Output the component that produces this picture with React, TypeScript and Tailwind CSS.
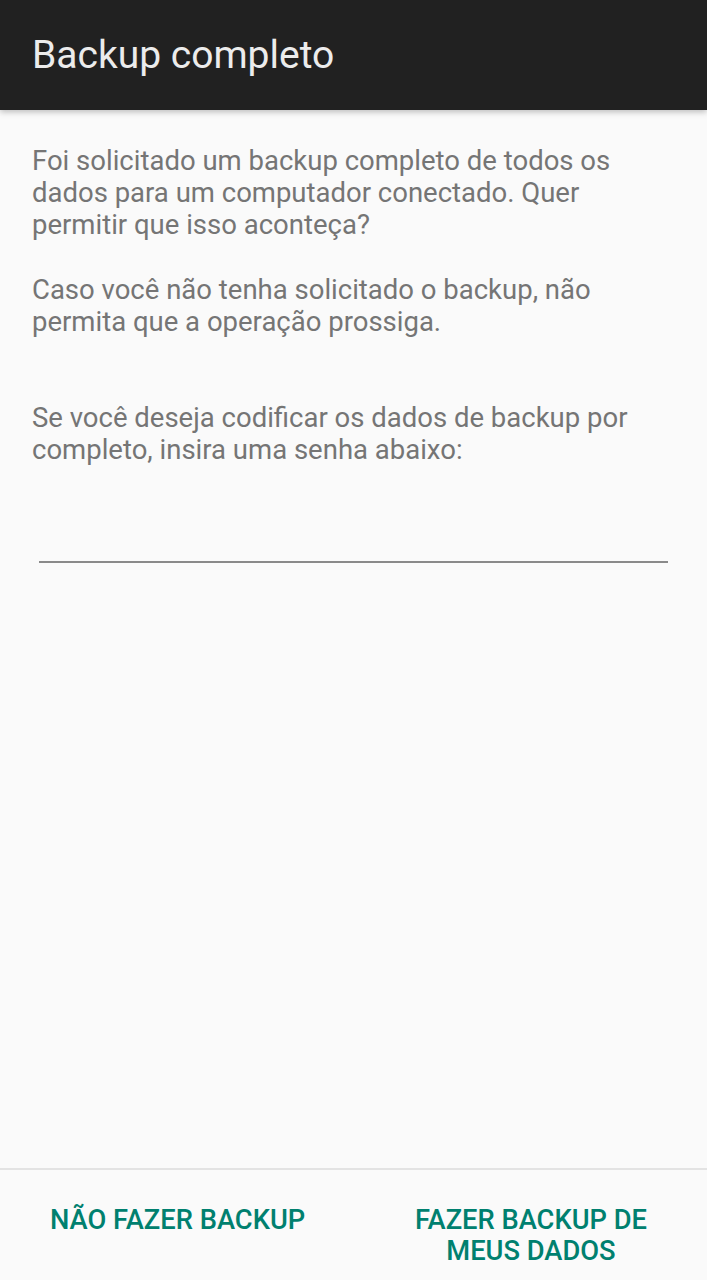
import React from "react";

export default function App() {
  return (
    <div
      className="w-[707px] h-[1280px] bg-[#fafafa] flex flex-col overflow-hidden"
      style={{ fontFamily: "Roboto, 'Noto Sans', sans-serif" }}
    >
      <div className="h-[110px] bg-[#212121] flex items-center px-[32px] shadow-[0_2px_6px_rgba(0,0,0,0.25)] relative z-10 shrink-0">
        <h1 className="text-[39px] text-[#ececec] font-normal leading-none">Backup completo</h1>
      </div>
      <div className="flex-1 px-[32px] pt-[35px] text-[27.5px] leading-[32px] text-[#757575]">
        <p>Foi solicitado um backup completo de todos os dados para um computador conectado. Quer permitir que isso aconteça?</p>
        <p className="mt-[33px]">Caso você não tenha solicitado o backup, não permita que a operação prossiga.</p>
        <p className="mt-[64px]">Se você deseja codificar os dados de backup por completo, insira uma senha abaixo:</p>
        <div className="mt-[95px] mx-[7px] h-[2px] bg-[#8a8a8a]" />
      </div>
      <div className="h-[2px] bg-[#e3e3e3] shrink-0" />
      <div className="h-[110px] flex shrink-0 text-[#00806f] text-[27.3px] leading-[31px] font-medium uppercase">
        <div className="w-1/2 flex items-start pt-[35px] pl-[50px]">NÃO FAZER BACKUP</div>
        <div className="w-1/2 flex items-start pt-[35px] justify-end text-center pr-[60px]">
          <span>FAZER BACKUP DE<br />MEUS DADOS</span>
        </div>
      </div>
    </div>
  );
}
